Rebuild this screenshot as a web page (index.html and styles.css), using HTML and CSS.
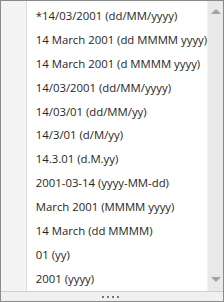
FILE: index.html
```html
<!DOCTYPE html>
<html lang="en">
<head>
  <meta charset="UTF-8">
  <title>Date formats</title>
  <link rel="stylesheet" href="styles.css">
</head>
<body>
  <div class="dropdown">
    <div class="body">
      <div class="gutter"></div>
      <ul class="list">
        <li>*14/03/2001 (dd/MM/yyyy)</li>
        <li>14 March 2001 (dd MMMM yyyy)</li>
        <li>14 March 2001 (d MMMM yyyy)</li>
        <li>14/03/2001 (dd/MM/yyyy)</li>
        <li>14/03/01 (dd/MM/yy)</li>
        <li>14/3/01 (d/M/yy)</li>
        <li>14.3.01 (d.M.yy)</li>
        <li>2001-03-14 (yyyy-MM-dd)</li>
        <li>March 2001 (MMMM yyyy)</li>
        <li>14 March (dd MMMM)</li>
        <li>01 (yy)</li>
        <li>2001 (yyyy)</li>
      </ul>
      <div class="scrollbar">
        <span class="arrow up"></span>
        <span class="arrow down"></span>
      </div>
    </div>
    <div class="grip">
      <span class="dot"></span><span class="dot"></span><span class="dot"></span><span class="dot"></span>
    </div>
  </div>
</body>
</html>
```

FILE: styles.css
```css
body { margin:0; padding:0; background:#fff; }
.dropdown { width:224px; height:302px; box-sizing:border-box; border:1px solid #8a8a8a; display:flex; flex-direction:column; font-family:"Open Sans", sans-serif; font-size:11.35px; color:#262626; }
.body { flex:1; display:flex; min-height:0; }
.gutter { width:25px; background:#f4f4f4; border-right:1px solid #dedede; }
.list { flex:1; list-style:none; margin:0; padding:3px 0 0 9px; background:#fff; }
.list li { height:23.9px; line-height:23.9px; white-space:nowrap; }
.scrollbar { width:15px; background:#e9e9e9; border-left:1px solid #f2f2f2; display:flex; flex-direction:column; justify-content:space-between; align-items:center; padding:8px 0 9px; }
.arrow { width:0; height:0; border-left:5px solid transparent; border-right:5px solid transparent; }
.arrow.up { border-bottom:5px solid #a3a3a3; }
.arrow.down { border-top:5px solid #a3a3a3; }
.grip { height:9px; border-top:1px solid #cfcfcf; background:#f0f0f0; display:flex; justify-content:center; align-items:center; gap:3px; padding-right:4px; }
.dot { width:2px; height:2px; background:#777; }
```
